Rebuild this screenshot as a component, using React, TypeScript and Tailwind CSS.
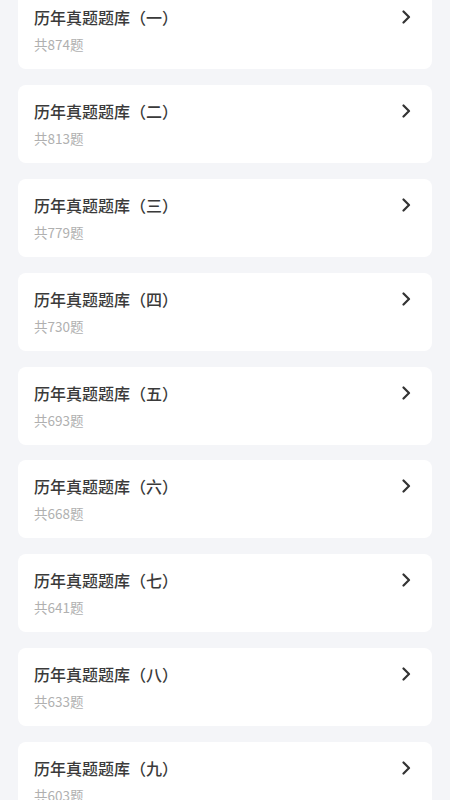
const banks = [
  { name: "历年真题题库（一）", count: 874 },
  { name: "历年真题题库（二）", count: 813 },
  { name: "历年真题题库（三）", count: 779 },
  { name: "历年真题题库（四）", count: 730 },
  { name: "历年真题题库（五）", count: 693 },
  { name: "历年真题题库（六）", count: 668 },
  { name: "历年真题题库（七）", count: 641 },
  { name: "历年真题题库（八）", count: 633 },
  { name: "历年真题题库（九）", count: 603 },
];

function Chevron() {
  return (
    <svg width="10" height="14" viewBox="0 0 10 14" fill="none" className="shrink-0">
      <path d="M2.5 1.5 L8 7 L2.5 12.5" stroke="#333333" strokeWidth="2.2" strokeLinecap="round" strokeLinejoin="round" />
    </svg>
  );
}

export default function App() {
  return (
    <div
      className="h-[800px] overflow-hidden bg-[#f4f5f8]"
      style={{ fontFamily: '"Noto Sans CJK SC", "Noto Sans", sans-serif' }}
    >
      <div className="mt-[-8.9px] flex flex-col gap-[15.86px] px-[18px]">
        {banks.map((b) => (
          <div
            key={b.name}
            className="flex h-[78px] shrink-0 items-start justify-between rounded-[8px] bg-white pl-[16px] pr-[21px]"
          >
            <div className="flex flex-col pt-[14px]">
              <span className="text-[16px] font-medium leading-[24px] text-[#3a3a3a]">{b.name}</span>
              <span className="mt-[5px] text-[13.5px] leading-[20px] text-[#b0b0b0]">共{b.count}题</span>
            </div>
            <div className="pt-[19px]">
              <Chevron />
            </div>
          </div>
        ))}
      </div>
    </div>
  );
}
